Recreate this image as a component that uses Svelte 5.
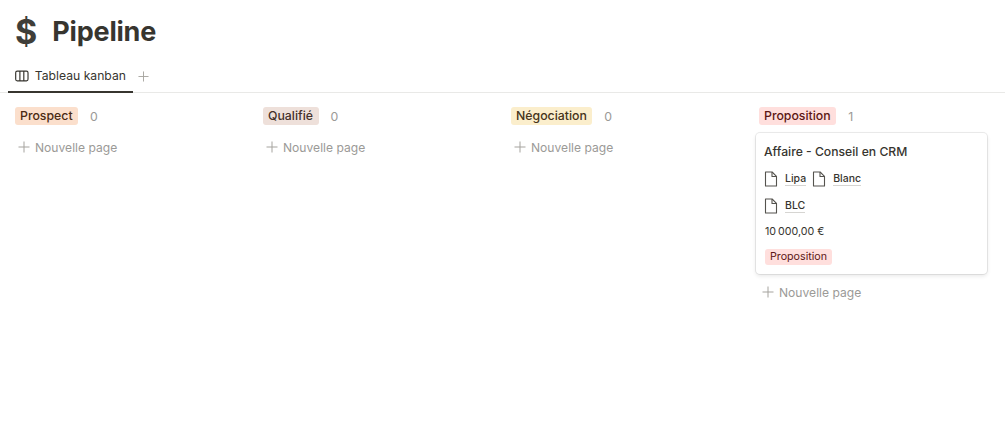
<script>
  const columns = [
    { name: 'Prospect', count: 0, tone: 'orange' },
    { name: 'Qualifié', count: 0, tone: 'brown' },
    { name: 'Négociation', count: 0, tone: 'yellow' },
    { name: 'Proposition', count: 1, tone: 'red', card: true }
  ];
</script>

{#snippet doc()}
  <svg class="d" viewBox="0 0 14 16" width="14" height="16" fill="none" stroke="#55534e" stroke-width="1.1" aria-hidden="true">
    <path d="M1.5 1h6.6L12.5 5.4V15h-11z" stroke-linejoin="round" />
    <path d="M8 1v4.5h4.5" stroke-linejoin="round" />
  </svg>
{/snippet}

{#snippet plus(size)}
  <svg viewBox="0 0 12 12" width={size} height={size} fill="none" stroke="#a5a39e" stroke-width="1" aria-hidden="true">
    <path d="M6 0.5v11M0.5 6h11" />
  </svg>
{/snippet}

<div class="page">
  <header class="title">
    <span class="emoji">$</span>
    <h1>Pipeline</h1>
  </header>

  <nav class="tabs">
    <div class="tab">
      <svg viewBox="0 0 14 12" width="14" height="12" fill="none" stroke="#37352f" stroke-width="1.2" aria-hidden="true">
        <rect x="0.7" y="1" width="12.6" height="10" rx="1.6" />
        <path d="M5 1v10M9 1v10" />
      </svg>
      <span>Tableau kanban</span>
    </div>
    <span class="add-view">{@render plus(11)}</span>
  </nav>

  <main class="board">
    {#each columns as col}
      <section class="column">
        <div class="col-head">
          <span class="tag big {col.tone}">{col.name}</span>
          <span class="count">{col.count}</span>
        </div>
        {#if col.card}
          <article class="card">
            <div class="card-title">Affaire - Conseil en CRM</div>
            <div class="rel">
              {@render doc()}<span class="link">Lipa</span>
              {@render doc()}<span class="link">Blanc</span>
            </div>
            <div class="rel">
              {@render doc()}<span class="link">BLC</span>
            </div>
            <div class="amount">10&#8239;000,00 €</div>
            <div class="tag-row"><span class="tag small red">Proposition</span></div>
          </article>
        {/if}
        <div class="new">{@render plus(12)}<span>Nouvelle page</span></div>
      </section>
    {/each}
  </main>
</div>

<style>
  :global(body) {
    margin: 0;
    background: #fff;
    font-family: Inter, "Liberation Sans", sans-serif;
    color: #37352f;
  }
  .page {
    width: 1005px;
    height: 425px;
    overflow: hidden;
  }
  .title {
    display: flex;
    align-items: center;
    padding: 11px 0 0 15px;
    height: 42px;
    gap: 15px;
  }
  .emoji {
    font-size: 34px;
    font-weight: 700;
    line-height: 42px;
    color: #3f3e39;
  }
  h1 {
    margin: 0;
    font-size: 27px;
    font-weight: 700;
    letter-spacing: -0.2px;
    line-height: 42px;
  }
  .tabs {
    display: flex;
    align-items: center;
    margin-top: 7px;
    height: 32px;
    border-bottom: 1px solid #e9e9e7;
    padding-left: 8px;
  }
  .tab {
    display: flex;
    align-items: center;
    gap: 6px;
    height: 32px;
    padding: 0 7px;
    box-sizing: border-box;
    width: 125px;
    border-bottom: 2px solid #37352f;
    margin-bottom: -1px;
    font-size: 12.2px;
    white-space: nowrap;
  }
  .add-view {
    display: flex;
    margin-left: 5px;
  }
  .board {
    display: grid;
    grid-template-columns: repeat(4, 248px);
    padding: 12px 0 0 8px;
  }
  .column {
    padding: 0 13px 0 4px;
  }
  .col-head {
    display: flex;
    align-items: center;
    height: 22px;
    padding-left: 3px;
    gap: 12px;
  }
  .tag {
    border-radius: 3px;
    white-space: nowrap;
  }
  .tag.big {
    font-size: 12.3px;
    font-weight: 500;
    line-height: 18px;
    padding: 0 5.5px 0 5px;
  }
  .tag.small {
    font-size: 10.7px;
    line-height: 16px;
    padding: 0 5px;
  }
  .orange { background: #fbdfcc; color: #4a2a12; }
  .brown { background: #eee0da; color: #44302a; }
  .yellow { background: #fbeecc; color: #46341a; }
  .red { background: #ffdfdd; color: #5d1715; }
  .count {
    font-size: 12.3px;
    color: #9b9a97;
  }
  .card {
    margin-top: 6px;
    height: 141px;
    box-sizing: border-box;
    padding: 10px 8px 0;
    border-radius: 4px;
    box-shadow: 0 0 0 1px rgba(15, 15, 15, 0.08), 0 2px 4px rgba(15, 15, 15, 0.1);
  }
  .card-title {
    font-size: 12.2px;
    font-weight: 500;
    line-height: 18px;
  }
  .rel {
    display: flex;
    align-items: center;
    height: 27px;
    font-size: 10.5px;
    font-weight: 500;
  }
  .card-title + .rel {
    margin-top: 4px;
  }
  .d {
    flex: none;
  }
  .link {
    margin: 0 6px 0 7px;
    border-bottom: 1px solid #d6d5d2;
    line-height: 13px;
  }
  .amount {
    font-size: 10.7px;
    line-height: 16px;
    padding: 5px 1px 0;
    height: 26px;
    box-sizing: border-box;
  }
  .tag-row {
    display: flex;
    padding: 4px 0 0 1px;
  }
  .new {
    display: flex;
    align-items: center;
    gap: 5px;
    margin-top: 8px;
    height: 24px;
    padding-left: 6px;
    font-size: 12.1px;
    color: #9b9a97;
  }
  .card + .new {
    margin-top: 6px;
  }
</style>
